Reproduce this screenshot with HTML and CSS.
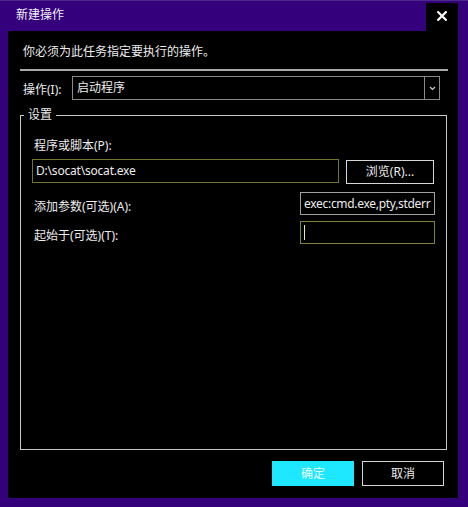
FILE: index.html
```html
<!DOCTYPE html>
<html lang="zh-CN">
<head>
<meta charset="utf-8">
<title>新建操作</title>
<link rel="stylesheet" href="styles.css">
</head>
<body>
<div class="window">
  <div class="titlebar">
    <div class="title">新建操作</div>
    <div class="close">
      <svg width="10" height="10" viewBox="0 0 10 10"><path d="M1.2 1.2 L8.8 8.8 M8.8 1.2 L1.2 8.8" stroke="#fff" stroke-width="2.2" stroke-linecap="square"/></svg>
    </div>
  </div>
  <div class="content">
    <div class="intro">你必须为此任务指定要执行的操作。</div>
    <div class="sep"></div>
    <div class="op-row">
      <div class="op-label">操作(I):</div>
      <div class="select">
        <div class="select-text">启动程序</div>
        <div class="select-arrow">
          <svg width="7" height="5" viewBox="0 0 7 5"><path d="M1 1 L3.5 3.5 L6 1" stroke="#cfcfcf" stroke-width="1.2" fill="none"/></svg>
        </div>
      </div>
    </div>
    <fieldset class="group">
      <legend class="legend">设置</legend>
      <div class="field-label first">程序或脚本(P):</div>
      <div class="path-row">
        <div class="input path">D:\socat\socat.exe</div>
        <div class="btn browse">浏览(R)...</div>
      </div>
      <div class="opt-row args-row">
        <div class="field-label">添加参数(可选)(A):</div>
        <div class="input small args">exec:cmd.exe,pty,stderr</div>
      </div>
      <div class="opt-row start-row">
        <div class="field-label">起始于(可选)(T):</div>
        <div class="input small focus"><span class="caret"></span></div>
      </div>
    </fieldset>
    <div class="actions">
      <div class="btn ok">确定</div>
      <div class="btn cancel">取消</div>
    </div>
  </div>
</div>
</body>
</html>
```
FILE: styles.css
```css
html, body {
  margin: 0;
  padding: 0;
  background: #33007a;
}
body {
  font-family: "Noto Sans", "Noto Sans CJK SC", sans-serif;
  font-size: 12px;
  color: #ececec;
}
.window {
  width: 468px;
  height: 507px;
  background: #34007c;
  border-top: 1px solid #4b2a8a;
  box-sizing: border-box;
  display: flex;
  flex-direction: column;
}
.titlebar {
  height: 30px;
  display: flex;
  align-items: stretch;
}
.title {
  flex: 1;
  padding-left: 16px;
  line-height: 28px;
  font-size: 12px;
  color: #f0f0f0;
}
.close {
  width: 32px;
  margin-top: 2px;
  margin-right: 10px;
  background: #000;
  display: flex;
  align-items: center;
  justify-content: center;
  padding-bottom: 2px;
  box-sizing: border-box;
}
.content {
  flex: 1;
  margin: 0 10px 9px 8px;
  background: #000;
  display: flex;
  flex-direction: column;
}
.intro {
  padding: 12px 0 0 15px;
  line-height: 17px;
  height: 26px;
}
.sep {
  height: 2px;
  margin: 0 10px 0 12px;
  background: #a8a8a8;
}
.op-row {
  display: flex;
  align-items: center;
  margin: 5px 18px 0 15px;
}
.op-label {
  width: 49px;
  padding-top: 2px;
}
.select {
  flex: 1;
  height: 24px;
  box-sizing: border-box;
  border: 1px solid #8a8a8a;
  display: flex;
}
.select-text {
  flex: 1;
  padding-left: 4px;
  line-height: 21px;
}
.select-arrow {
  width: 14px;
  border-left: 1px solid #8a8a8a;
  display: flex;
  align-items: center;
  justify-content: center;
}
.group {
  margin: 8px 11px 0 12px;
  padding: 0 12px 0 11px;
  height: 342px;
  box-sizing: border-box;
  border: 1px solid #c8c8c8;
  min-width: 0;
}
.legend {
  padding: 0 4px;
  margin-left: -8px;
  line-height: 14px;
}
.field-label {
  line-height: 16px;
  padding-left: 2px;
}
.field-label.first {
  margin-top: 16px;
}
.path-row {
  display: flex;
  align-items: flex-start;
  margin-top: 5px;
}
.input {
  box-sizing: border-box;
  border: 1px solid #a0a0a0;
  height: 24px;
  line-height: 21px;
  padding-left: 3px;
  white-space: nowrap;
  overflow: hidden;
}
.path {
  width: 307px;
  border-color: #72752e;
  letter-spacing: -0.2px;
}
.btn {
  box-sizing: border-box;
  height: 24px;
  border: 1px solid #d6d6d6;
  text-align: center;
  line-height: 21px;
}
.browse {
  width: 88px;
  margin-left: 7px;
  margin-top: 1px;
}
.opt-row {
  display: flex;
  align-items: center;
  justify-content: space-between;
}
.args-row {
  margin-top: 8px;
}
.start-row {
  margin-top: 6px;
}
.small {
  width: 135px;
  height: 23px;
  margin-right: -1px;
}
.args {
  padding-left: 3px;
  letter-spacing: -0.3px;
}
.opt-row .field-label {
  padding-top: 6px;
}
.focus {
  border-color: #7f8236;
  display: flex;
  align-items: center;
}
.caret {
  display: block;
  width: 1px;
  height: 15px;
  background: #e8e8c0;
}
.actions {
  display: flex;
  justify-content: flex-end;
  gap: 8px;
  margin: 11px 14px 0 0;
}
.ok {
  width: 82px;
  height: 25px;
  line-height: 25px;
  background: #1ee8ff;
  border: none;
  color: #e6fbff;
}
.cancel {
  width: 82px;
  height: 25px;
  line-height: 23px;
  background: #000;
}
```
